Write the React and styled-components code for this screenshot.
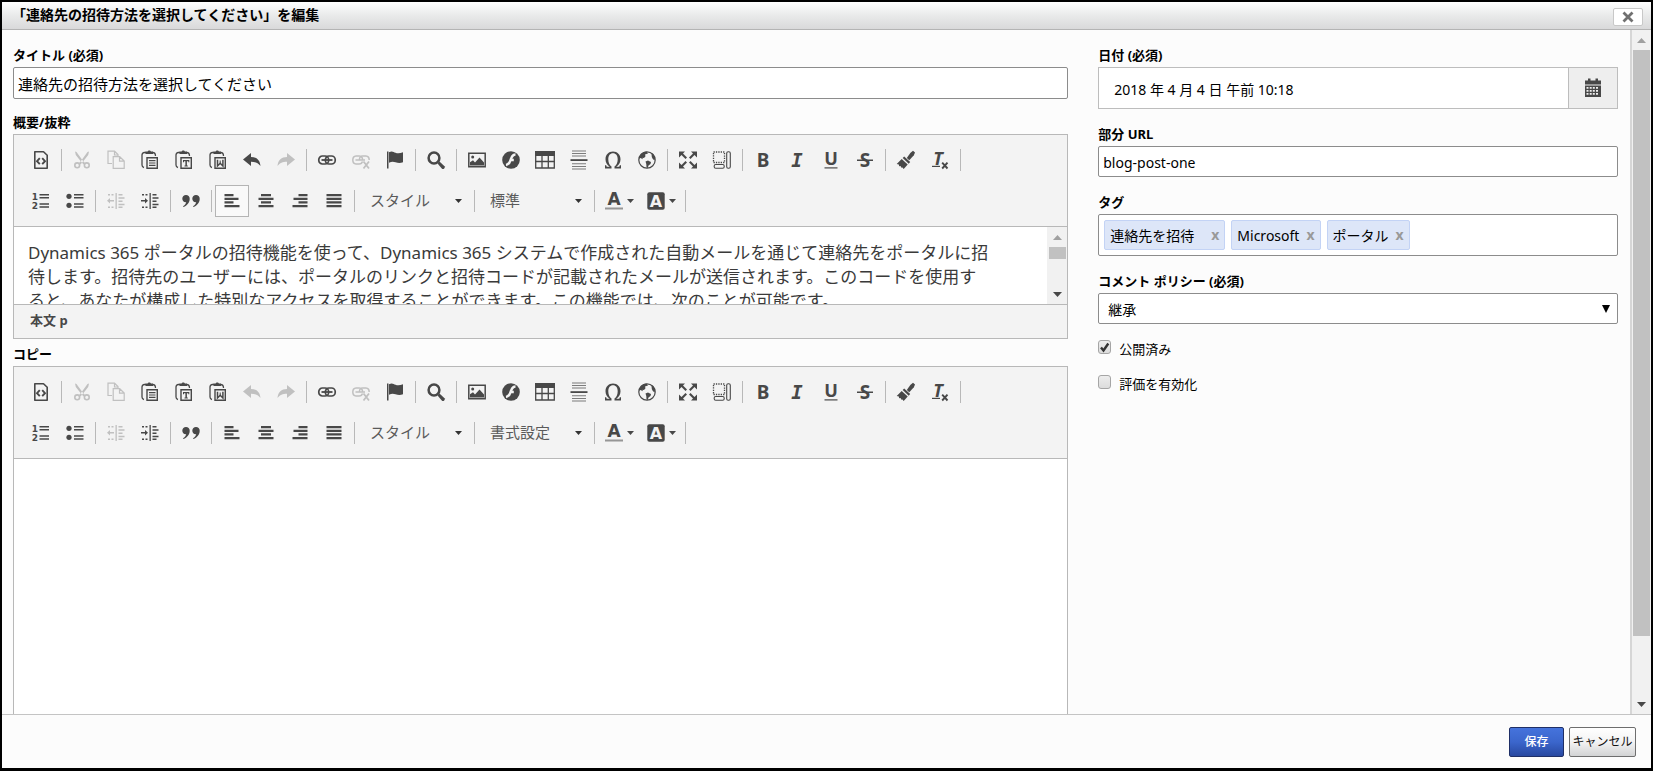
//App.jsx

import React from 'react';
import styled, { createGlobalStyle } from 'styled-components';

const GlobalStyle = createGlobalStyle`
  * {
    box-sizing: border-box;
  }

  body {
    margin: 0;
    background: #000;
    color: #000;
    font-family: "Noto Sans", "Noto Sans CJK JP", sans-serif;
    font-size: 14px;
  }

  button, input, select {
    margin: 0;
    font-family: inherit;
    color: inherit;
  }
`;

const Dialog = styled.div`
  display: flex;
  flex-direction: column;
  height: 100vh;
  border: 2px solid #000;
  border-bottom-width: 3px;
  background: #fcfcfc;
`;

const DialogHeader = styled.header`
  display: flex;
  align-items: center;
  justify-content: space-between;
  height: 28px;
  flex: none;
  padding: 0 8px 0 10px;
  border-bottom: 1px solid #b4b4b4;
  background: linear-gradient(#fefefe, #e9eaea 50%, #d9d9da);
`;

const DialogTitle = styled.h1`
  margin: 0;
  padding-bottom: 2px;
  font-size: 14px;
  line-height: 24px;
  font-weight: bold;
`;

const CloseButton = styled.button`
  display: flex;
  align-items: center;
  justify-content: center;
  width: 30px;
  height: 18px;
  margin-top: 2px;
  padding: 0;
  border: 1px solid #c8c8c8;
  border-radius: 2px;
  background: #fff;
`;

const DialogBody = styled.div`
  display: flex;
  flex: 1;
  min-height: 0;
`;

const Form = styled.form`
  display: grid;
  grid-template-columns: 67fr 33fr;
  gap: 30px;
  flex: 1;
  min-width: 0;
  padding: 16px 12px 0 11px;
  border-right: 2px solid #d6d6d6;
  overflow: hidden;
`;

const MainColumn = styled.div`
  display: flex;
  flex-direction: column;
  min-width: 0;
  min-height: 0;
`;

const SideColumn = styled.div`
  display: flex;
  flex-direction: column;
  gap: 16px;
  min-width: 0;
`;

const Field = styled.div`
  display: flex;
  flex-direction: column;
  flex: ${(p) => (p.$grow ? '1' : 'none')};
  min-height: 0;
  margin-bottom: ${(p) => p.$space || 0}px;
`;

const Label = styled.label`
  margin-bottom: 3px;
  font-size: 13px;
  line-height: 18px;
  font-weight: bold;
`;

const TextInput = styled.input`
  width: 100%;
  height: ${(p) => (p.$large ? 32 : 31)}px;
  padding: 1px 4px 0;
  border: 1px solid #8c8c8c;
  border-radius: 2px;
  background: #fff;
  font-size: ${(p) => (p.$large ? 15 : 14)}px;
`;

/* Editor */

const EditorFrame = styled.div`
  display: flex;
  flex-direction: column;
  flex: ${(p) => (p.$grow ? '1' : 'none')};
  border: 1px solid #b8b8b8;
  border-bottom-width: ${(p) => (p.$grow ? 0 : 1)}px;
  background: #fff;
`;

const Toolbar = styled.div`
  display: flex;
  flex-direction: column;
  gap: 9px;
  padding: 9px 10px;
  border-bottom: 1px solid #b8b8b8;
  background: #f3f3f3;
`;

const ToolbarRow = styled.div`
  display: flex;
  align-items: center;
  height: 32px;
`;

const ToolButton = styled.button`
  display: flex;
  align-items: center;
  justify-content: center;
  gap: 3px;
  flex: none;
  width: ${(p) => (p.$menu ? 42 : 34)}px;
  height: 32px;
  padding: 0;
  border: 1px solid ${(p) => (p.$active ? '#b4b4b4' : 'transparent')};
  background: ${(p) => (p.$active ? '#f9f9f9' : 'none')};
  color: #484848;

  &:disabled {
    color: #c0c0c0;
  }
`;

const ToolIcon = styled.svg`
  flex: none;
  overflow: visible;

  text {
    line-height: 1;
  }
`;

const Separator = styled.span`
  flex: none;
  width: 1px;
  height: 22px;
  margin: 0 3px;
  background: #b8b8b8;
`;

const Combo = styled.span`
  display: grid;
  grid-template-columns: 1fr 16px;
  align-items: center;
  flex: none;
  width: 113px;
  height: 32px;
  color: #484848;
`;

const ComboSelect = styled.select`
  grid-area: 1 / 1 / 2 / 3;
  width: 100%;
  height: 32px;
  padding: 0 20px 2px 12px;
  border: 0;
  background: none;
  appearance: none;
  color: #5a5a5a;
  font-size: 15px;
`;

const ComboCaret = styled.span`
  grid-area: 1 / 2;
  display: flex;
  color: #333;
  pointer-events: none;
`;

const EditorContent = styled.div`
  display: flex;
  height: ${(p) => (p.$grow ? 'auto' : '77px')};
  flex: ${(p) => (p.$grow ? '1' : 'none')};
  overflow: hidden;
`;

const EditorText = styled.div`
  flex: 1;
  min-width: 0;
  padding: 14px 14px 0;
  color: #3a3a3a;
  font-size: 17px;
  line-height: 24px;
  white-space: nowrap;
  outline: none;

  p {
    margin: 0;
  }
`;

const EditorPath = styled.div`
  height: 34px;
  padding: 0 16px;
  border-top: 1px solid #b8b8b8;
  background: #f3f3f3;
  color: #484848;
  font-size: 13px;
  line-height: 30px;
  font-weight: bold;
`;

/* Scroll bars */

const Track = styled.div`
  display: flex;
  flex-direction: column;
  align-items: center;
  flex: none;
  width: ${(p) => (p.$small ? 20 : 19)}px;
  background: #f1f1f1;
`;

const TrackArrow = styled.span`
  display: flex;
  align-items: center;
  justify-content: center;
  flex: none;
  height: 20px;
  color: ${(p) => (p.$dim ? '#a0a0a0' : '#484848')};
`;

const TrackBar = styled.div`
  display: flex;
  flex-direction: column;
  flex: 1;
  width: 17px;
`;

const Thumb = styled.div`
  height: ${(p) => p.$size};
  background: #c1c1c1;
`;

/* Side fields */

const DateGroup = styled.div`
  display: flex;
  height: 42px;
  border: 1px solid #bdbdbd;
  background: #fff;
`;

const DateInput = styled.input`
  flex: 1;
  min-width: 0;
  padding: 2px 15px 0;
  border: 0;
  background: none;
  font-size: 14px;
`;

const DateButton = styled.button`
  display: flex;
  align-items: center;
  justify-content: center;
  width: 49px;
  padding: 0;
  border: 0;
  border-left: 1px solid #bdbdbd;
  background: #eee;
  color: #484848;
`;

const TagBox = styled.div`
  display: flex;
  align-items: center;
  gap: 6px;
  height: 42px;
  padding: 0 5px;
  border: 1px solid #8c8c8c;
  border-radius: 2px;
  background: #fff;
`;

const Tag = styled.span`
  display: flex;
  align-items: center;
  gap: ${(p) => (p.$wide ? 17 : 7)}px;
  height: 30px;
  padding: 0 5px;
  border: 1px solid #c3d3f5;
  border-radius: 2px;
  background: #dde6f8;
  font-size: 14px;
  white-space: nowrap;
`;

const TagRemove = styled.button`
  padding: 0;
  border: 0;
  background: none;
  color: #999;
  font-size: 14px;
  line-height: 20px;
  font-weight: bold;
`;

const TagInput = styled.input`
  flex: 1;
  min-width: 0;
  border: 0;
  background: none;
  outline: none;
`;

const SelectWrap = styled.div`
  display: grid;
  grid-template-columns: 1fr 16px;
`;

const PolicySelect = styled.select`
  grid-area: 1 / 1 / 2 / 3;
  width: 100%;
  height: 31px;
  padding: 2px 20px 0 9px;
  border: 1px solid #8c8c8c;
  border-radius: 2px;
  background: #fff;
  appearance: none;
  font-size: 14px;
`;

const SelectArrow = styled.span`
  grid-area: 1 / 2;
  display: flex;
  align-items: center;
  pointer-events: none;
`;

const CheckRow = styled.label`
  display: flex;
  gap: 8px;
  font-size: 13px;
  line-height: 19px;
`;

const CheckMark = styled.span`
  display: grid;
  width: 13px;
  height: 14px;

  input, svg {
    grid-area: 1 / 1;
  }

  svg {
    pointer-events: none;
  }
`;

const CheckInput = styled.input`
  width: 13px;
  height: 14px;
  border: 1px solid #a5a5a5;
  border-radius: 3px;
  background: linear-gradient(#ededed, #dcdcdc);
  appearance: none;
`;

const DialogFooter = styled.footer`
  display: flex;
  justify-content: flex-end;
  flex: none;
  gap: 5px;
  height: 54px;
  padding: 12px 15px 0;
  border-top: 1px solid #c4c4c4;
`;

const FooterButton = styled.button`
  width: ${(p) => (p.$primary ? 55 : 67)}px;
  height: 30px;
  padding: 0 0 2px;
  border: 1px solid ${(p) => (p.$primary ? '#1f2f66' : '#6e6e6e')};
  border-radius: 2px;
  background: ${(p) =>
    p.$primary
      ? 'linear-gradient(#4573dc, #3b66cc 50%, #2848a0)'
      : 'linear-gradient(#fff, #f3f3f3 50%, #d2d3d4)'};
  color: ${(p) => (p.$primary ? '#fff' : '#111')};
  font-size: 12px;
  font-weight: ${(p) => (p.$primary ? 500 : 400)};
  white-space: nowrap;
`;

/* Icons, all drawn on a 20 x 20 grid in the current colour */

const clipboard = (
  <>
    <path d="M6 2.500H4.500Q2 2.500 2 5v10q0 2 2 2.500M12.500 2.500q3 0 3 3.500" fill="none" stroke="currentColor" strokeWidth="1.300" />
    <path d="M5.500 4V1.500h2L8.500 0.500h1.500l1 1h2V4z" />
    <path d="M7 7.700h10.300v10.600H7z" fill="none" stroke="currentColor" strokeWidth="1.400" />
  </>
);

const undoPath = <path d="M1 9.500 9 3v4c5.500 0 9 3 9.500 9-2.500-3.200-5-4.300-9.500-4.300V16z" />;

const linkRings = (
  <g fill="none" stroke="currentColor">
    <rect x="1.800" y="6" width="9.800" height="8" rx="3.600" strokeWidth="1.700" />
    <rect x="8.400" y="6" width="9.800" height="8" rx="3.600" strokeWidth="1.700" />
    <path d="M4.500 10h11" strokeWidth="1.800" />
  </g>
);

const indentLines = (
  <path d="M9.500 2h1.300v16H9.500zM12.500 3h4v1.500h-4zM12.500 6.300h6v1.500h-6zM12.500 9.500h4v1.500h-4zM12.500 12.700h6v1.500h-6zM12.500 15.500h4V17h-4zM2 3h2v1.400H2zM5.500 3h2v1.400h-2zM2 15.500h2V17H2zM5.500 15.500h2V17h-2z" />
);

const icons = {
  source: (
    <>
      <path d="M3.800 1.700h8.700l3.700 3.600v13H3.800z" fill="none" stroke="currentColor" strokeWidth="1.600" strokeLinejoin="round" />
      <path d="M8.800 8.200 6 11.200l2.800 3M11.200 8.200l2.800 3-2.800 3" fill="none" stroke="currentColor" strokeWidth="1.900" />
    </>
  ),
  cut: (
    <>
      <path d="M3 1.500 4.500 2l6.200 8.500 2.300 2.500-1.500 1.500-3-3.500L3.800 5zM17 1.500 15.500 2 9.300 10.500 7 13l1.500 1.500 3-3.500L16.200 5z" />
      <circle cx="5.200" cy="15.300" r="2.400" fill="none" stroke="currentColor" strokeWidth="1.600" />
      <circle cx="14.800" cy="15.300" r="2.400" fill="none" stroke="currentColor" strokeWidth="1.600" />
    </>
  ),
  copy: (
    <g fill="none" stroke="currentColor" strokeWidth="1.200">
      <path d="M6 13.500H2V1.200h6.500L12 4.500v2" />
      <path d="M8.500 1.500v3.500H12M7.200 6.700h6.500l4.500 4.300v7.300h-11zM13.500 7v4.200h4.500" />
    </g>
  ),
  paste: (
    <>
      {clipboard}
      <path d="M9 10h6.500v1.200H9zM9 12.400h6.500v1.200H9zM9 14.800h6.500V16H9z" />
    </>
  ),
  pasteText: (
    <>
      {clipboard}
      <path d="M9 10h6.300v2.200h-1V11.200h-1.400v4.300h.9v1h-3.300v-1h.9v-4.300H10v1H9z" />
    </>
  ),
  pasteWord: (
    <>
      {clipboard}
      <path d="M9.500 9.800v6.200l2.700-2.700L14.900 16V9.800" fill="none" stroke="currentColor" strokeWidth="1.500" />
      <path d="M12.200 10.500v3" stroke="currentColor" strokeWidth="1" />
    </>
  ),
  undo: undoPath,
  redo: <g transform="matrix(-1 0 0 1 20 0)">{undoPath}</g>,
  link: linkRings,
  unlink: (
    <>
      <g fill="none" stroke="currentColor" strokeWidth="1.500">
        <path d="M11.500 11.500Q10.800 14 8.200 14H5Q1.800 13.700 1.800 10T5 6h3.200q3.400.200 3.400 4M8.400 10q0-4 3.200-4H15q3.200.200 3.200 4M4.500 10h9.500" />
        <path d="m12.500 11.500 5.500 7M18 11.500l-5.500 7" strokeWidth="1.800" />
      </g>
    </>
  ),
  flag: (
    <path d="M2 1.500h1.500v17H2zM4 2.300C7 .5 8.500 2 10.500 2.800c2 .8 4.500.700 7.500-.5v10c-3 1.200-5 .8-7.500 0-2.200-.8-4-.8-6.500.5z" />
  ),
  find: (
    <>
      <circle cx="8" cy="8" r="5.400" fill="none" stroke="currentColor" strokeWidth="2.500" />
      <path d="m11.500 13.500 2-2 5 4.700q.7 1.200-.3 2.200t-2.200.4z" />
    </>
  ),
  image: (
    <>
      <path d="M1.800 3.300h16.400v13.400H1.800z" fill="none" stroke="currentColor" strokeWidth="1.500" />
      <circle cx="5.700" cy="7" r="1.500" />
      <path d="M3 15.500v-3.300l3-2 2 2.300 4.500-5 4.500 5v3z" />
    </>
  ),
  flash: (
    <>
      <circle cx="10" cy="10" r="8.800" />
      <path d="M14.500 4.500c-3 0-3.700 2-4.700 5-.9 2.900-1.700 5-4.800 5.500M8.500 10h4.300" fill="none" stroke="#f3f3f3" strokeWidth="2.400" />
    </>
  ),
  table: (
    <>
      <path d="M0 1h20v5H0z" />
      <path d="M.7 5v13h18.600V5M0 11.500h20M7 5v13M13.300 5v13" fill="none" stroke="currentColor" strokeWidth="1.300" />
    </>
  ),
  rule: (
    <>
      <path d="M1.500 9.200h17V11h-17z" />
      <path d="M3 .500h14v1H3zM3 3h14v1H3zM3 5.500h14v1H3zM3 13.300h14v1H3zM3 16h14v1H3zM3 18.500h14v1H3z" opacity=".7" />
    </>
  ),
  omega: (
    <path d="M2 18.500v-3.300h1.200l.5 1.500h3C4 15 2.500 12.300 2.500 9.300 2.500 4.600 5.600 1.500 10 1.500s7.500 3.100 7.500 7.800c0 3-1.500 5.700-4.200 7.400h3l.5-1.500H18v3.300h-6.500v-2c2.200-1.500 3.200-4 3.200-7.200C14.700 5.400 12.900 3.200 10 3.200S5.300 5.400 5.300 9.300c0 3.200 1 5.700 3.200 7.200v2z" />
  ),
  globe: (
    <>
      <circle cx="10" cy="10" r="8.200" fill="none" stroke="currentColor" strokeWidth="1.200" />
      <path d="M3 5.500C4.500 3 7 1.700 9.500 1.600l1.500 2-3 1 .5 1.700-1.500 1.700-1.500-.2.300 1.500L3.500 8 2 8.500zM8.500 11.500l2.500-1 3 1.500-.5 2-2 1.500-.8 2.500-1.200-.5-.2-3.500zM14.500 3.700l1-.2c1.500 1.300 2.400 3 2.500 4.700l-.5 2.300-1.700-1.500-1-2z" />
    </>
  ),
  maximize: (
    <>
      <path d="M1 1.500h6L5 3.500l4 4L7.500 9l-4-4L1 7.500zM19 1.500h-6l2 2-4 4L12.500 9l4-4L19 7.500zM1 18.500h6l-2-2 4-4L7.500 11l-4 4L1 12.500zM19 18.500h-6l2-2-4-4 1.500-1.500 4 4 2.500-2.500z" />
    </>
  ),
  blocks: (
    <g fill="none" stroke="currentColor">
      <path d="M1.500 2h11v10.500h-11z" strokeWidth="1.300" strokeDasharray="1.300 1.100" />
      <rect x="14.700" y="1.700" width="3.600" height="16.600" rx="1.500" strokeWidth="1.100" />
      <rect x="2.200" y="14.500" width="10" height="3.800" rx="1.500" strokeWidth="1.100" />
    </g>
  ),
  bold: <text x="10" y="17" fontSize="19" fontWeight="bold" textAnchor="middle" fontFamily="Noto Sans">B</text>,
  italic: <text x="10" y="17" fontSize="19" fontWeight="bold" fontStyle="italic" textAnchor="middle" fontFamily="DejaVu Sans Mono">I</text>,
  underline: (
    <>
      <text x="10" y="15" fontSize="18" fontWeight="bold" textAnchor="middle" fontFamily="Noto Sans">U</text>
      <path d="M3.500 17.300h13v1.200h-13z" />
    </>
  ),
  strike: (
    <>
      <text x="10" y="17" fontSize="19" fontWeight="bold" textAnchor="middle" fontFamily="Noto Sans">S</text>
      <path d="M2 9.500h16V11H2z" />
    </>
  ),
  brush: (
    <>
      <path d="m17 .700 2 1.800-1.200 2.700-4.500 5-2.500-2.300 3.500-5z" />
      <path d="m8.200 6.500 6 5.500-1.500 1.700-6-5.600z" />
      <path d="m5.700 9 6 5.500-4 4.500-1.200-1.500-1 .300-1-1.800-1.300.3-.4-1.800L.700 14z" />
    </>
  ),
  clear: (
    <>
      <text x="8" y="14.500" fontSize="18" fontWeight="bold" fontStyle="italic" textAnchor="middle" fontFamily="Noto Sans">T</text>
      <path d="M2 15.800h8V17H2z" />
      <path d="m12.200 12.700 5.300 5.800M17.500 12.700l-5.300 5.800" fill="none" stroke="currentColor" strokeWidth="1.900" />
    </>
  ),
  ordered: (
    <>
      <text x="4" y="8.500" fontSize="9" fontWeight="bold" textAnchor="middle" fontFamily="DejaVu Sans">1</text>
      <text x="4" y="18" fontSize="9" fontWeight="bold" textAnchor="middle" fontFamily="DejaVu Sans">2</text>
      <path d="M8.500 3H18v1.400H8.500zM8.500 6H18v1.400H8.500zM8.500 12.300H18v1.400H8.500zM8.500 15.300H18v1.400H8.500z" />
    </>
  ),
  bulleted: (
    <>
      <circle cx="4" cy="5.300" r="2.600" />
      <circle cx="4" cy="14.300" r="2.600" />
      <path d="M9 3h9.500v1.400H9zM9 6h9.500v1.400H9zM9 12.300h9.500v1.400H9zM9 15.300h9.500v1.400H9z" />
    </>
  ),
  outdent: (
    <>
      {indentLines}
      <path d="M1 9.800 4 7v2h4v1.500H4v2z" />
    </>
  ),
  indent: (
    <>
      {indentLines}
      <path d="M8 9.800 5 7v2H1v1.500h4v2z" />
    </>
  ),
  quote: (
    <path d="M5 4a3.600 3.600 0 0 1 3.700 3.700C8.700 11.500 6 14.700 2.500 16l-.500-.8c1.700-1 3-2.500 3.200-4C3 11.500 1.300 9.800 1.300 7.700A3.600 3.600 0 0 1 5 4zM15 4a3.600 3.600 0 0 1 3.700 3.700c0 3.800-2.700 7-6.200 8.300l-.500-.8c1.700-1 3-2.500 3.200-4-2.200.300-3.900-1.400-3.900-3.500A3.600 3.600 0 0 1 15 4z" />
  ),
  left: <path d="M2.500 3h9v2.200h-9zM2.500 6.700h14v2.200h-14zM2.500 10.300h9v2.200h-9zM2.500 14h15v2.300h-15z" />,
  center: <path d="M5 3h10v2.200H5zM2.500 6.700h15v2.200h-15zM5 10.300h10v2.200H5zM2.500 14h15v2.300h-15z" />,
  right: <path d="M8.500 3h9v2.200h-9zM3.500 6.700h14v2.200h-14zM8.500 10.300h9v2.200h-9zM2.500 14h15v2.300h-15z" />,
  justify: <path d="M2.500 3h15v2.200h-15zM2.500 6.700h15v2.200h-15zM2.500 10.300h15v2.200h-15zM2.500 14h15v2.300h-15z" />,
  textColor: (
    <>
      <text x="10" y="14" fontSize="17" fontWeight="bold" textAnchor="middle" fontFamily="DejaVu Sans">A</text>
      <path d="M1 16.500h18v2H1z" opacity=".55" />
    </>
  ),
  bgColor: (
    <>
      <rect x="1.300" y="1.300" width="17.400" height="17.400" rx="2" />
      <text x="10" y="16" fontSize="16" fontWeight="bold" textAnchor="middle" fill="#f3f3f3" fontFamily="DejaVu Sans">A</text>
    </>
  ),
  calendar: (
    <>
      <path d="M2 2.500h3V.500h2.500v2h5v-2H15v2h3v4H2z" />
      <path fillRule="evenodd" d="M2 7.500h16V19H2zM3.500 9v1.700h2V9zM6.700 9v1.700h2V9zM9.800 9v1.700h2V9zM13 9v1.700h2V9zM3.500 12v1.700h2V12zM6.700 12v1.700h2V12zM9.800 12v1.700h2V12zM13 12v1.700h2V12zM3.500 15v1.700h2V15zM6.700 15v1.700h2V15zM9.800 15v1.700h2V15zM13 15v1.700h2V15z" />
    </>
  ),
};

function Icon({ name, size = 20 }) {
  return (
    <ToolIcon width={size} height={size} viewBox="0 0 20 20" fill="currentColor" aria-hidden="true">
      {icons[name]}
    </ToolIcon>
  );
}

function Caret({ up }) {
  return (
    <svg width="9" height="5" viewBox="0 0 9 5" fill="currentColor" aria-hidden="true">
      <path d={up ? 'M0 5 4.500 0 9 5z' : 'M0 0h9L4.500 5z'} />
    </svg>
  );
}

function MenuCaret() {
  return (
    <svg width="7" height="4" viewBox="0 0 7 4" fill="currentColor" aria-hidden="true">
      <path d="M0 0h7L3.500 4z" />
    </svg>
  );
}

const topGroups = [
  [['source', 'ソース']],
  [
    ['cut', '切り取り'],
    ['copy', 'コピー'],
    ['paste', '貼り付け'],
    ['pasteText', 'テキストとして貼り付け'],
    ['pasteWord', 'Word から貼り付け'],
    ['undo', '元に戻す'],
    ['redo', 'やり直し'],
  ],
  [['link', 'リンク'], ['unlink', 'リンクの解除'], ['flag', 'アンカー']],
  [['find', '検索']],
  [
    ['image', '画像'],
    ['flash', 'Flash'],
    ['table', '表'],
    ['rule', '水平線'],
    ['omega', '特殊文字'],
    ['globe', 'IFrame'],
  ],
  [['maximize', '最大化'], ['blocks', 'ブロック表示']],
  [['bold', '太字'], ['italic', '斜体'], ['underline', '下線'], ['strike', '取り消し線']],
  [['brush', '書式のコピー'], ['clear', '書式の解除']],
];

const bottomGroups = [
  [['ordered', '番号付きリスト'], ['bulleted', '箇条書き']],
  [['outdent', 'インデント解除'], ['indent', 'インデント']],
  [['quote', '引用']],
  [['left', '左揃え'], ['center', '中央揃え'], ['right', '右揃え'], ['justify', '両端揃え']],
];

function ToolGroups({ groups, disabled, active }) {
  return groups.map((group) => (
    <React.Fragment key={group[0][0]}>
      {group.map(([name, title]) => (
        <ToolButton
          key={name}
          type="button"
          aria-label={title}
          disabled={disabled.includes(name)}
          $active={active === name}
        >
          <Icon name={name} />
        </ToolButton>
      ))}
      <Separator />
    </React.Fragment>
  ));
}

function ToolCombo({ label, value }) {
  return (
    <Combo>
      <ComboSelect aria-label={label} defaultValue={value}>
        <option>{value}</option>
      </ComboSelect>
      <ComboCaret>
        <MenuCaret />
      </ComboCaret>
    </Combo>
  );
}

function EditorToolbar({ format, disabled, active }) {
  return (
    <Toolbar role="toolbar">
      <ToolbarRow>
        <ToolGroups groups={topGroups} disabled={disabled} />
      </ToolbarRow>
      <ToolbarRow>
        <ToolGroups groups={bottomGroups} disabled={disabled} active={active} />
        <ToolCombo label="スタイル" value="スタイル" />
        <Separator />
        <ToolCombo label="書式" value={format} />
        <Separator />
        <ToolButton type="button" aria-label="文字色" $menu>
          <Icon name="textColor" />
          <MenuCaret />
        </ToolButton>
        <ToolButton type="button" aria-label="背景色" $menu>
          <Icon name="bgColor" />
          <MenuCaret />
        </ToolButton>
        <Separator />
      </ToolbarRow>
    </Toolbar>
  );
}

function ScrollBar({ small, size }) {
  return (
    <Track $small={small} aria-hidden="true">
      <TrackArrow $dim>
        <Caret up />
      </TrackArrow>
      <TrackBar>
        <Thumb $size={size} />
      </TrackBar>
      <TrackArrow>
        <Caret />
      </TrackArrow>
    </Track>
  );
}

function CheckBox({ id, label, checked }) {
  const [on, setOn] = React.useState(checked);

  return (
    <CheckRow htmlFor={id}>
      <CheckMark>
        <CheckInput id={id} type="checkbox" checked={on} onChange={() => setOn(!on)} />
        {on && (
          <svg width="13" height="14" viewBox="0 0 13 14" aria-hidden="true">
            <path d="m3 7.500 2.500 3L10.300 3.500" fill="none" stroke="#333" strokeWidth="2.400" />
          </svg>
        )}
      </CheckMark>
      {label}
    </CheckRow>
  );
}

const tags = [
  { name: '連絡先を招待', wide: true },
  { name: 'Microsoft' },
  { name: 'ポータル' },
];

function App() {
  return (
    <Dialog role="dialog" aria-labelledby="dialog-title">
      <GlobalStyle />
      <DialogHeader>
        <DialogTitle id="dialog-title">「連絡先の招待方法を選択してください」を編集</DialogTitle>
        <CloseButton type="button" aria-label="閉じる">
          <svg width="12" height="12" viewBox="0 0 12 12" aria-hidden="true">
            <path d="m1.500 1.500 9 9M10.500 1.500l-9 9" stroke="#707070" strokeWidth="2.800" />
          </svg>
        </CloseButton>
      </DialogHeader>

      <DialogBody>
        <Form>
          <MainColumn>
            <Field $space={14}>
              <Label htmlFor="title">タイトル (必須)</Label>
              <TextInput id="title" $large defaultValue="連絡先の招待方法を選択してください" />
            </Field>

            <Field $space={6}>
              <Label id="summary-label" as="span">概要/抜粋</Label>
              <EditorFrame>
                <EditorToolbar format="標準" active="left" disabled={['cut', 'copy', 'redo', 'unlink', 'outdent']} />
                <EditorContent>
                  <EditorText role="textbox" aria-labelledby="summary-label" tabIndex={0}>
                    <p>
                      Dynamics 365 ポータルの招待機能を使って、Dynamics 365 システムで作成された自動メールを通じて連絡先をポータルに招
                      <br />
                      待します。招待先のユーザーには、ポータルのリンクと招待コードが記載されたメールが送信されます。このコードを使用す
                      <br />
                      ると、あなたが構成した特別なアクセスを取得することができます。この機能では、次のことが可能です。
                    </p>
                  </EditorText>
                  <ScrollBar small size="12px" />
                </EditorContent>
                <EditorPath>本文 p</EditorPath>
              </EditorFrame>
            </Field>

            <Field $grow>
              <Label id="copy-label" as="span">コピー</Label>
              <EditorFrame $grow>
                <EditorToolbar format="書式設定" disabled={['cut', 'copy', 'undo', 'redo', 'unlink', 'outdent']} />
                <EditorContent $grow>
                  <EditorText role="textbox" aria-labelledby="copy-label" tabIndex={0} />
                </EditorContent>
              </EditorFrame>
            </Field>
          </MainColumn>

          <SideColumn>
            <Field>
              <Label htmlFor="date">日付 (必須)</Label>
              <DateGroup>
                <DateInput id="date" defaultValue="2018 年 4 月 4 日 午前 10:18" />
                <DateButton type="button" aria-label="日付を選択">
                  <Icon name="calendar" />
                </DateButton>
              </DateGroup>
            </Field>

            <Field>
              <Label htmlFor="url">部分 URL</Label>
              <TextInput id="url" defaultValue="blog-post-one" />
            </Field>

            <Field>
              <Label htmlFor="tags">タグ</Label>
              <TagBox>
                {tags.map((tag) => (
                  <Tag key={tag.name} $wide={tag.wide}>
                    {tag.name}
                    <TagRemove type="button">x</TagRemove>
                  </Tag>
                ))}
                <TagInput id="tags" />
              </TagBox>
            </Field>

            <Field>
              <Label htmlFor="policy">コメント ポリシー (必須)</Label>
              <SelectWrap>
                <PolicySelect id="policy" defaultValue="継承">
                  <option>継承</option>
                </PolicySelect>
                <SelectArrow>
                  <svg width="8" height="8" viewBox="0 0 8 8" aria-hidden="true">
                    <path d="M0 0h8L4 8z" />
                  </svg>
                </SelectArrow>
              </SelectWrap>
            </Field>

            <CheckBox id="published" label="公開済み" checked />
            <CheckBox id="ratings" label="評価を有効化" checked={false} />
          </SideColumn>
        </Form>
        <ScrollBar size="91%" />
      </DialogBody>

      <DialogFooter>
        <FooterButton type="button" $primary>保存</FooterButton>
        <FooterButton type="button">キャンセル</FooterButton>
      </DialogFooter>
    </Dialog>
  );
}

export default App;
